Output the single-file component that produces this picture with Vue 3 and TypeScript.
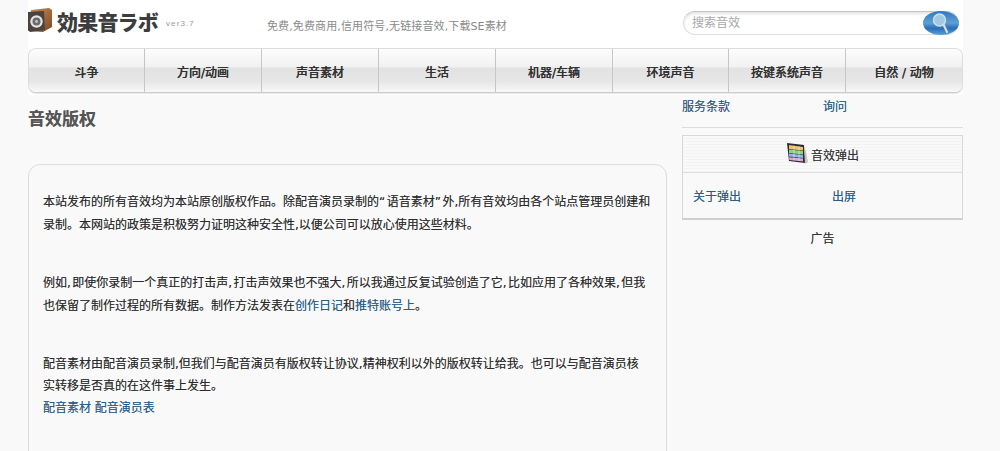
<script setup lang="ts">
const nav: { label: string; width: number }[] = [
  { label: '斗争', width: 116 },
  { label: '方向/动画', width: 117 },
  { label: '声音素材', width: 117 },
  { label: '生活', width: 117 },
  { label: '机器/车辆', width: 117 },
  { label: '环境声音', width: 116 },
  { label: '按键系统声音', width: 117 },
  { label: '自然 / 动物', width: 117 },
]
</script>

<template>
  <div class="page">
    <div class="head-band">
      <header class="top">
        <div class="brand">
          <svg class="speaker" width="26" height="25" viewBox="0 0 26 25">
            <defs>
              <linearGradient id="wood" x1="0" y1="0" x2="1" y2="1">
                <stop offset="0" stop-color="#c8925a" />
                <stop offset="1" stop-color="#80471f" />
              </linearGradient>
            </defs>
            <path d="M4 2 L22 0 L25 2 V19 L16 24 L1 23 Z" fill="url(#wood)" />
            <path d="M1 4 L17 3 L18 22 L3 24 L1 22 Z" fill="#4a4340" />
            <circle cx="9.5" cy="13.5" r="6.2" fill="#e6e6e6" />
            <circle cx="9.5" cy="13.5" r="4" fill="#6b6b6b" />
            <circle cx="9.5" cy="13.5" r="1.4" fill="#c8c8c8" />
          </svg>
          <span class="logo-text">効果音ラボ</span>
          <span class="ver">ver3.7</span>
        </div>
        <div class="tagline">免费,免费商用,信用符号,无链接音效,下载SE素材</div>
        <div class="search">
          <span class="search-text">搜索音效</span>
          <svg class="globe" width="36" height="24" viewBox="0 0 36 24">
            <defs>
              <linearGradient id="gl" x1="0" y1="0" x2="0" y2="1">
                <stop offset="0" stop-color="#2f78bd" />
                <stop offset="0.5" stop-color="#5f9fd4" />
                <stop offset="0.72" stop-color="#2a6fb5" />
                <stop offset="1" stop-color="#5aa0d8" />
              </linearGradient>
            </defs>
            <ellipse cx="18" cy="12" rx="18" ry="12" fill="url(#gl)" />
            <circle cx="16.5" cy="9" r="6" fill="#a2c8e6" stroke="#cfe1ef" stroke-width="1.4" />
            <path d="M20.5 13.5 L24 21" stroke="#d5dde4" stroke-width="2.2" stroke-linecap="round" />
          </svg>
        </div>
      </header>

      <nav class="nav">
        <a v-for="item in nav" :key="item.label" class="nav-item" :style="{ width: item.width + 'px' }">{{ item.label }}</a>
      </nav>
    </div>

    <div class="columns">
      <main class="main">
        <h1 class="title">音效版权</h1>
        <section class="card">
          <p>本站发布的所有音效均为本站原创版权作品。除配音演员录制的<span class="q">“</span>语音素材<span class="q">”</span>外,所有音效均由各个站点管理员创建和<br />录制。本网站的政策是积极努力证明这种安全性,以便公司可以放心使用这些材料。</p>
          <p>例如<span class="c">,</span>即使你录制一个真正的打击声<span class="c">,</span>打击声效果也不强大<span class="c">,</span>所以我通过反复试验创造了它<span class="c">,</span>比如应用了各种效果<span class="c">,</span>但我<br />也保留了制作过程的所有数据。制作方法发表在<a>创作日记</a>和<a>推特账号上</a>。</p>
          <p class="last">配音素材由配音演员录制,但我们与配音演员有版权转让协议,精神权利以外的版权转让给我。也可以与配音演员核<br />实转移是否真的在这件事上发生。<br /><a>配音素材 配音演员表</a></p>
        </section>
      </main>

      <aside class="side">
        <div class="side-links">
          <a class="l1">服务条款</a>
          <a>询问</a>
        </div>
        <div class="box">
          <div class="box-head">
            <svg class="palette" width="24" height="24" viewBox="0 0 24 24">
              <path d="M1 1 L18 3 L19 21 L3 19 Z" fill="#2b2b2b" />
              <path d="M19 5 L22 20 L19 22 Z" fill="#c4c4c4" />
              <path d="M3 3 L17 5 V8.4 L3 7 Z" fill="#e9c46a" />
              <path d="M3 7.6 L17 9 V12.4 L3 11 Z" fill="#8fcf8a" />
              <path d="M3 11.6 L17 13 V16 L3 14.6 Z" fill="#8fb4e3" />
              <path d="M3 15.2 L17 16.6 V19.4 L3.4 18 Z" fill="#d6a8d8" />
              <path d="M8 3.5 V18.6 M13 4.2 V19" stroke="#ffffff" stroke-opacity="0.55" stroke-width="0.8" />
            </svg>
            <span>音效弹出</span>
          </div>
          <div class="box-body">
            <a class="l2">关于弹出</a>
            <a>出屏</a>
          </div>
        </div>
        <div class="ad">广告</div>
      </aside>
    </div>
  </div>
</template>

<style>
html, body { margin: 0; background: #f9f9f9; }
</style>

<style scoped>
.page {
  width: 935px;
  margin-left: 28px;
  height: 451px;
  overflow: hidden;
  font-family: "DejaVu Sans", "Noto Sans CJK SC", sans-serif;
  font-size: 12px;
  color: #2b2b2b;
  background: #f9f9f9;
}
a { color: #23608f; }
.head-band { background: #fff; height: 95px; }
.top {
  display: flex;
  align-items: center;
  height: 47px;
}
.brand { display: flex; align-items: center; width: 239px; }
.speaker { flex: none; margin-top: -6px; margin-left: -1px; margin-right: 1px; }
.logo-text {
  font-family: "Noto Sans CJK JP", sans-serif;
  font-size: 21px;
  line-height: 26px;
  font-weight: 900;
  color: #3d3d3d;
  margin-top: -6px;
  margin-left: 3px;
  width: 103px;
  white-space: nowrap;
  letter-spacing: -0.8px;
}
.ver {
  font-family: "Liberation Sans", sans-serif;
  font-size: 8px;
  color: #999;
  margin-left: 6px;
  letter-spacing: 1.1px;
}
.tagline {
  width: 416px;
  font-size: 11px;
  letter-spacing: 0.12px;
  color: #8a8a8a;
  margin-top: 3px;
}
.search {
  display: flex;
  align-items: center;
  justify-content: space-between;
  width: 276px;
  height: 24px;
  margin-top: -1px;
  box-sizing: border-box;
  border: 1px solid #dedede;
  border-top-color: #c4c4c4;
  border-radius: 12px;
  padding-left: 8px;
  box-shadow: inset 0 2px 3px #e4e4e4;
}
.search-text { font-size: 12px; color: #a8a8a8; margin-top: -3px; }
.globe { margin-right: -1px; flex: none; }
.nav {
  display: flex;
  height: 45px;
  box-sizing: border-box;
  border: 1px solid #dcdcdc;
  border-bottom-color: #cdcdcd;
  border-radius: 8px;
  overflow: hidden;
  background: #fff;
  box-shadow: 0 1px 1px #e6e6e6;
  margin-top: 1px;
}
.nav-item {
  display: flex;
  align-items: center;
  justify-content: center;
  box-sizing: border-box;
  padding-top: 2px;
  color: #333;
  font-size: 12px;
  font-weight: 500;
  text-shadow: 0 0 0.5px #333;
  border-right: 1px solid #c6c6c6;
  background: linear-gradient(#fdfdfd 0, #f1f1f1 42%, #e2e2e2 44%, #e6e6e6 75%, #f8f8f8 100%);
}
.nav-item:last-child { border-right: none; flex: 1; }
.columns { display: flex; text-shadow: 0 0 0.4px rgba(0, 0, 0, 0.45); }
.main { width: 639px; }
.title {
  margin: 14px 0 0;
  font-size: 17px;
  line-height: 20px;
  font-weight: 700;
  color: #555;
}
.card {
  margin-top: 35px;
  height: 300px;
  box-sizing: border-box;
  border: 1px solid #dcdcdc;
  border-radius: 12px;
  padding: 26px 10px 0 14px;
  font-size: 12px;
  line-height: 23px;
}
.card p { margin: 0 0 35px; }
.card p.last { margin: 0; line-height: 22px; }
.q { letter-spacing: 1.5px; }
.c { letter-spacing: 1.4px; }
.side { width: 281px; margin-left: 15px; }
.side-links {
  height: 29px;
  padding-top: 3px;
  line-height: 18px;
  border-bottom: 1px solid #dcdcdc;
}
.l1 { display: inline-block; width: 141px; }
.box {
  margin-top: 7px;
  border: 1px solid #d8d8d8;
  border-bottom: 2px solid #cfcfcf;
  box-sizing: border-box;
  height: 85px;
}
.box-head {
  height: 36px;
  border-bottom: 1px solid #dcdcdc;
  display: flex;
  align-items: center;
  justify-content: center;
  gap: 1px;
  background: repeating-linear-gradient(#f9f9f9 0 2px, #f3f3f3 2px 3px);
  color: #333;
}
.box-body { padding: 15px 10px 0; line-height: 18px; }
.l2 { display: inline-block; width: 139px; }
.ad { margin-top: 10px; text-align: center; line-height: 18px; color: #333; }
</style>
